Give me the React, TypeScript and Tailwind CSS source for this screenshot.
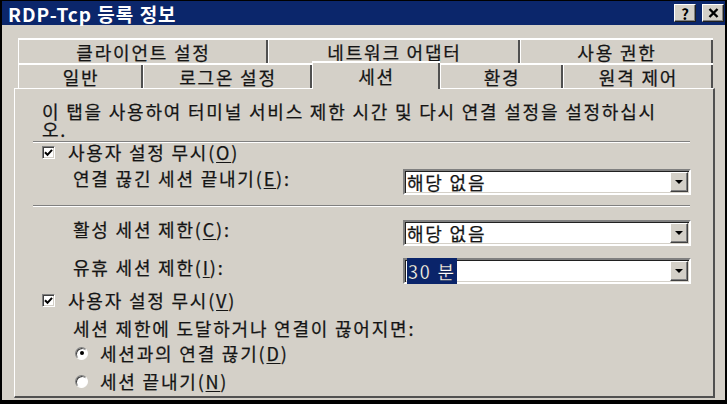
import type { ReactNode } from "react";

const font = "font-['Noto_Sans_CJK_KR','Noto_Sans',sans-serif]";

type Tab = { label: string; w: string; active?: boolean };

const backTabs: Tab[] = [
  { label: "클라이언트 설정", w: "w-[250px]" },
  { label: "네트워크 어댑터", w: "w-[252px]" },
  { label: "사용 권한", w: "w-[193px]" },
];

const frontTabs: Tab[] = [
  { label: "일반", w: "w-[125px]" },
  { label: "로그온 설정", w: "w-[169px]" },
  { label: "세션", w: "w-[128px]", active: true },
  { label: "환경", w: "w-[123px]" },
  { label: "원격 제어", w: "w-[150px]" },
];

function Key({ k }: { k: string }) {
  return (
    <>
      (<u className="underline-offset-2">{k}</u>)
    </>
  );
}

function Separator({ className = "" }: { className?: string }) {
  return (
    <div className={`ml-[17px] w-[657px] border-t border-b border-t-[#808080] border-b-white ${className}`} />
  );
}

function Checkbox() {
  return (
    <div className="flex h-[13px] w-[13px] items-center justify-center border border-t-[#808080] border-l-[#808080] border-b-white border-r-white bg-white shadow-[inset_1px_1px_0_#404040,inset_-1px_-1px_0_#d4d0c8]">
      <svg width="9" height="9" viewBox="0 0 9 9">
        <path d="M1 4.2 L3.5 6.8 L8 1.8" fill="none" stroke="#000" strokeWidth="2" />
      </svg>
    </div>
  );
}

function Radio({ on }: { on?: boolean }) {
  return (
    <div className="flex h-[13px] w-[13px] items-center justify-center rounded-full border border-t-[#808080] border-l-[#808080] border-b-white border-r-white bg-white shadow-[inset_1px_1px_0_#404040]">
      {on && <div className="h-[4px] w-[4px] rounded-full bg-black" />}
    </div>
  );
}

function Combo({ value, selected }: { value: string; selected?: boolean }) {
  return (
    <div className="flex h-[26px] w-[288px] items-center border-2 border-t-[#808080] border-l-[#808080] border-b-white border-r-white bg-white shadow-[inset_1px_1px_0_#202020,inset_-1px_-1px_0_#d4d0c8]">
      <div className="flex-1 pl-[2px] leading-[19px]">
        {selected ? <span className="bg-[#0a246a] px-[1px] text-white">{value}</span> : value}
      </div>
      <div className="mr-[1px] flex h-[20px] w-[18px] items-center justify-center border border-t-white border-l-white border-r-[#404040] border-b-[#404040] bg-[#d4d0c8] shadow-[inset_-1px_-1px_0_#808080]">
        <svg width="8" height="4" viewBox="0 0 8 4">
          <path d="M0 0h8L4 4z" fill="#000" />
        </svg>
      </div>
    </div>
  );
}

function ComboRow({ label, value, selected, className = "" }: { label: ReactNode; value: string; selected?: boolean; className?: string }) {
  return (
    <div className={`ml-[57px] flex items-start ${className}`}>
      <div className="w-[330px] pt-px">{label}</div>
      <Combo value={value} selected={selected} />
    </div>
  );
}

export default function App() {
  return (
    <div className={`h-[404px] w-[727px] bg-black px-[2px] pt-px pb-[4px] ${font} text-[18px] leading-[17px] tracking-[1.8px] text-[#151515] [-webkit-text-stroke:0.25px_#151515]`}>
      <div className="flex h-full flex-col bg-[#d4d0c8]">
        <div className="flex h-[24px] items-center justify-between bg-[#0b266b] pl-[6px] pr-[1px] [-webkit-text-stroke:0]">
          <span className="text-[19px] font-bold tracking-[1px] text-white">RDP-Tcp 등록 정보</span>
          <div className="flex gap-[6px]">
            <div className="flex h-[18px] w-[22px] items-center justify-center border border-t-white border-l-white border-r-[#202020] border-b-[#202020] bg-[#d4d0c8] text-[15px] font-bold leading-none tracking-normal text-black shadow-[inset_-1px_-1px_0_#808080]">
              ?
            </div>
            <div className="flex h-[18px] w-[22px] items-center justify-center border border-t-white border-l-white border-r-[#202020] border-b-[#202020] bg-[#d4d0c8] shadow-[inset_-1px_-1px_0_#808080]">
              <svg width="11" height="10" viewBox="0 0 11 10">
                <path d="M1.5 1 L9.5 9 M9.5 1 L1.5 9" stroke="#000" strokeWidth="2.4" />
              </svg>
            </div>
          </div>
        </div>

        <div className="mt-[13px] ml-[16px] flex h-[25px]">
          {backTabs.map((t) => (
            <div key={t.label} className={`${t.w} flex justify-center border-t-2 border-l border-t-white border-l-white pt-[4px] shadow-[inset_-2px_0_0_#505050]`}>
              {t.label}
            </div>
          ))}
        </div>
        <div className="ml-[16px] flex h-[25px] items-start">
          {frontTabs.map((t) =>
            t.active ? (
              <div key={t.label} className={`${t.w} relative z-10 -mt-[2px] flex h-[28px] justify-center border-t-2 border-l border-t-white border-l-white bg-[#d4d0c8] pt-[5px] shadow-[inset_-2px_0_0_#505050]`}>
                {t.label}
              </div>
            ) : (
              <div key={t.label} className={`${t.w} flex h-[25px] justify-center border-t-2 border-l border-t-white border-l-white pt-[4px] shadow-[inset_-2px_0_0_#505050]`}>
                {t.label}
              </div>
            ),
          )}
        </div>

        <div className="ml-[12px] flex h-[310px] w-[701px] flex-col border-t border-l border-t-white border-l-white border-r-2 border-b-2 border-r-[#505050] border-b-[#505050] pl-px">
          <p className="mt-[13px] ml-[26px] leading-[18px]">
            이 탭을 사용하여 터미널 서비스 제한 시간 및 다시 연결 설정을 설정하십시
            <br />
            오.
          </p>
          <Separator className="mt-[3px]" />

          <div className="ml-[26px] flex h-[18px] items-center gap-[13px]">
            <Checkbox />
            <span>
              사용자 설정 무시<Key k="O" />
            </span>
          </div>
          <ComboRow
            className="mt-[8px]"
            label={
              <>
                연결 끊긴 세션 끝내기<Key k="E" />:
              </>
            }
            value="해당 없음"
          />
          <Separator className="mt-[10px]" />

          <ComboRow
            className="mt-[13px]"
            label={
              <>
                활성 세션 제한<Key k="C" />:
              </>
            }
            value="해당 없음"
          />
          <ComboRow
            className="mt-[12px]"
            label={
              <>
                유휴 세션 제한<Key k="I" />:
              </>
            }
            value="30 분"
            selected
          />

          <div className="mt-[7px] ml-[26px] flex h-[18px] items-center gap-[13px]">
            <Checkbox />
            <span>
              사용자 설정 무시<Key k="V" />
            </span>
          </div>
          <p className="mt-[11px] ml-[57px]">세션 제한에 도달하거나 연결이 끊어지면:</p>
          <div className="mt-[7px] ml-[59px] flex h-[18px] items-center gap-[12px]">
            <Radio on />
            <span>
              세션과의 연결 끊기<Key k="D" />
            </span>
          </div>
          <div className="mt-[10px] ml-[59px] flex h-[18px] items-center gap-[12px]">
            <Radio />
            <span>
              세션 끝내기<Key k="N" />
            </span>
          </div>
        </div>
      </div>
    </div>
  );
}
